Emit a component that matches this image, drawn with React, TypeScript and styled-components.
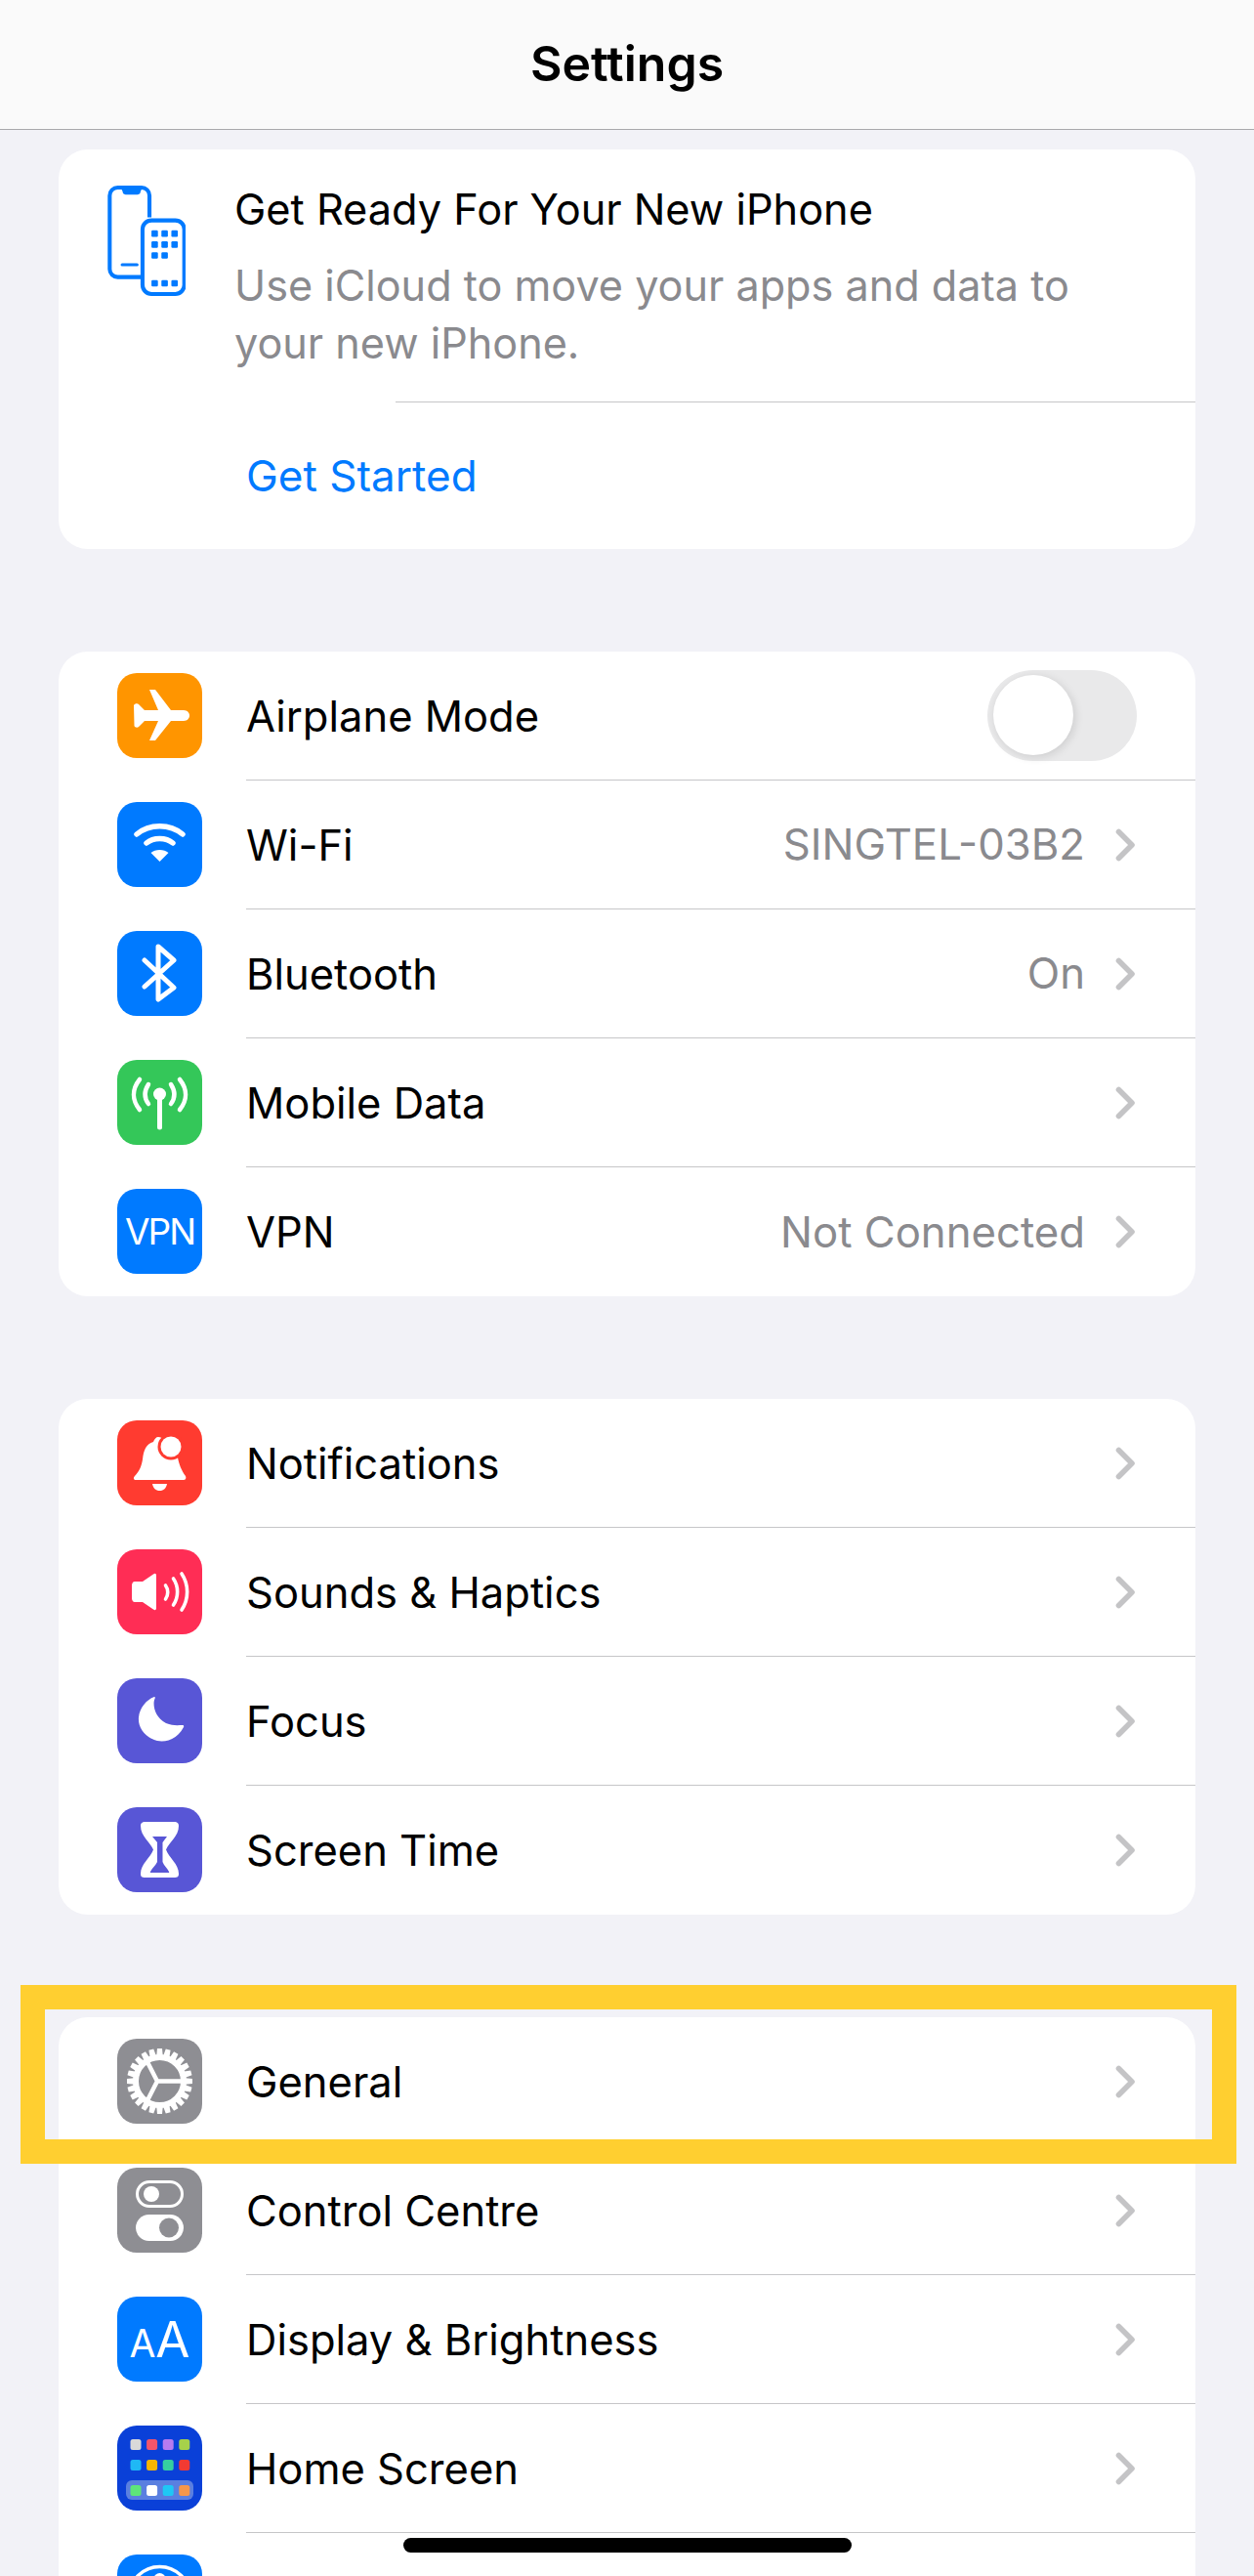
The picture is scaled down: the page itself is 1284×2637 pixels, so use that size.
import React from "react";
import styled, { createGlobalStyle } from "styled-components";

const GlobalStyle = createGlobalStyle`
  html, body { margin: 0; padding: 0; background: #f2f2f7; }
  body { font-family: Inter, "Noto Sans", "Liberation Sans", sans-serif; -webkit-font-smoothing: antialiased; }
`;

const Screen = styled.div`
  position: relative;
  width: 1284px;
  height: 2637px;
  overflow: hidden;
  background: #f2f2f7;
`;

const NavBar = styled.header`
  height: 132px;
  box-sizing: content-box;
  display: flex;
  align-items: center;
  justify-content: center;
  background: #fafafa;
  border-bottom: 1px solid #a9a9ac;
`;

const NavTitle = styled.h1`
  margin: 0 0 2px;
  font-size: 50px;
  font-weight: 600;
  color: #000;
`;

const Groups = styled.main`
  display: flex;
  flex-direction: column;
  gap: 105px;
  padding: 20px 60px 0;
`;

const Card = styled.section`
  background: #fff;
  border-radius: 30px;
  overflow: hidden;
`;

const Promo = styled.div`
  display: flex;
  height: 258px;
  box-sizing: border-box;
  padding: 37px 0 0 50px;
  gap: 50px;
`;

const PromoText = styled.div`
  display: flex;
  flex-direction: column;
  margin-top: -2px;
`;

const PromoTitle = styled.div`
  font-size: 43.3px;
  line-height: 52px;
  color: #000;
`;

const PromoBody = styled.div`
  margin-top: 23px;
  font-size: 43.2px;
  line-height: 59px;
  color: #8a8a8e;
`;

const CardRule = styled.div`
  height: 1px;
  margin-left: 345px;
  background: #c6c6c8;
`;

const ActionRow = styled.div`
  display: flex;
  align-items: center;
  height: 150px;
  padding-left: 192px;
  font-size: 44px;
  color: #007aff;
`;

const Row = styled.div`
  display: flex;
  align-items: center;
  height: 132px;
  box-sizing: border-box;
  padding-left: 60px;
`;

const Tile = styled.div<{ $bg: string }>`
  width: 87px;
  height: 87px;
  flex: none;
  margin-bottom: 2px;
  border-radius: 20px;
  background: ${(p) => p.$bg};
  display: flex;
  align-items: center;
  justify-content: center;
  overflow: hidden;
`;

const RowMain = styled.div<{ $last?: boolean }>`
  flex: 1;
  align-self: stretch;
  display: flex;
  align-items: center;
  margin-left: 45px;
  padding-right: 60px;
  border-bottom: ${(p) => (p.$last ? "none" : "1px solid #c6c6c8")};
`;

const RowLabel = styled.span`
  flex: 1;
  font-size: 43.5px;
  color: #000;
`;

const RowValue = styled.span`
  font-size: 43.7px;
  color: #8a8a8e;
  margin-right: 31px;
`;

const Chevron = styled.svg`
  width: 21px;
  height: 34px;
  flex: none;
  margin-right: 1px;
`;

const Switch = styled.div`
  position: relative;
  width: 153px;
  height: 93px;
  border-radius: 47px;
  background: #e9e9ea;
`;

const SwitchKnob = styled.div`
  position: absolute;
  top: 5px;
  left: 6px;
  width: 82px;
  height: 82px;
  border-radius: 50%;
  background: #fff;
  box-shadow: 2px 2px 10px rgba(0, 0, 0, 0.12);
`;

const TileCaption = styled.span`
  color: #fff;
  font-size: 37px;
  letter-spacing: -2px;
`;

const LetterPair = styled.span`
  display: flex;
  align-items: baseline;
  color: #fff;
  line-height: 1;
  margin-top: 1px;
`;

const Letter = styled.span<{ $size: number }>`
  font-size: ${(p) => p.$size}px;
`;

const Highlight = styled.div`
  position: absolute;
  left: 21px;
  top: 2032px;
  width: 1245px;
  height: 183px;
  box-sizing: border-box;
  border: 25px solid #ffcf30;
`;

const HomeIndicator = styled.div`
  position: absolute;
  left: 413px;
  top: 2598px;
  width: 459px;
  height: 15px;
  border-radius: 8px;
  background: #000;
`;

const Glyph = styled.svg`
  width: 87px;
  height: 87px;
  display: block;
`;

const RowArrow = () => (
  <Chevron viewBox="0 0 21 34" fill="none">
    <path d="M3.5 3.5 L17 17 L3.5 30.5" stroke="#c4c4c6" strokeWidth="5.6" strokeLinecap="round" strokeLinejoin="round" />
  </Chevron>
);

const PhonesIcon = () => (
  <svg width="80" height="113" viewBox="2 2 78 111" style={{ flex: "none" }}>
    <path
      d="M36 94 H12 a8 8 0 0 1 -8 -8 V12 a8 8 0 0 1 8 -8 H36 a8 8 0 0 1 8 8 V34"
      fill="none"
      stroke="#007aff"
      strokeWidth="4"
    />
    <path d="M15 4 h22 l-2 4 a3 3 0 0 1 -3 3 h-12 a3 3 0 0 1 -3 -3 z" fill="#007aff" />
    <rect x="15" y="80" width="18" height="3" rx="1.5" fill="#007aff" />
    <rect x="37" y="37" width="42" height="74" rx="9" fill="#fff" stroke="#007aff" strokeWidth="4" />
    {[0, 1, 2].flatMap((c) =>
      [0, 1, 2].map((r) =>
        r === 2 && c === 2 ? null : (
          <rect key={`${c}-${r}`} x={46 + c * 10} y={47 + r * 11} width="6.5" height="6.5" rx="1.2" fill="#007aff" />
        )
      )
    )}
    {[0, 1, 2].map((c) => (
      <rect key={c} x={46 + c * 10} y={97} width="6.5" height="6.5" rx="1.2" fill="#007aff" />
    ))}
  </svg>
);

const PlaneIcon = () => (
  <Glyph viewBox="0 0 87 87">
    <path
      fill="#fff"
      d="M33 17 L39 17 L55 38 L68 38 C72 38 74 41 74 43.5 C74 46 72 49 68 49 L55 49 L39 69 L33 69 L42 49 L28 49 L22 55 C21 56 18 56 17.5 54 L17 33 C18 31 21 31 22 32 L28 38 L42 38 Z"
    />
  </Glyph>
);

const WifiIcon = () => (
  <Glyph viewBox="0 0 87 87" fill="none" stroke="#fff" strokeWidth="6.5">
    <path d="M20 33 C33 22 54 22 67 33" strokeWidth="5.5" strokeLinecap="round" />
    <path d="M30 42 C37 36 50 36 57 42" strokeWidth="5.5" strokeLinecap="round" />
    <path d="M34.5 52 C39 48 48 48 52.5 52 L43.5 61 Z" fill="#fff" stroke="none" />
  </Glyph>
);

const BluetoothIcon = () => (
  <Glyph viewBox="0 0 87 87" fill="none">
    <path
      d="M28 30 L58 58 L42 70 V16 L58 30 L28 57"
      stroke="#fff"
      strokeWidth="5"
      strokeLinecap="round"
      strokeLinejoin="round"
    />
  </Glyph>
);

const AntennaIcon = () => (
  <Glyph viewBox="0 0 87 87" fill="none" stroke="#fff" strokeLinecap="round">
    <circle cx="43.5" cy="35" r="6.5" fill="#fff" stroke="none" />
    <path d="M43.5 36 V69" strokeWidth="5" />
    <path d="M32 25 C27.5 32 27.5 39 32 45" strokeWidth="4.5" />
    <path d="M55 25 C59.5 32 59.5 39 55 45" strokeWidth="4.5" />
    <path d="M23 20 C15 30 15 41 23 51" strokeWidth="4.5" />
    <path d="M64 20 C72 30 72 41 64 51" strokeWidth="4.5" />
  </Glyph>
);

const BellIcon = () => (
  <Glyph viewBox="0 0 87 87">
    <path
      fill="#fff"
      d="M42 17 C47 17 49 21 50 23 C52 35 60 34 62 38 C63 44 66 52 70 57 C71 59 70 61 68 61 H19 C17 61 16 59 18 57 C23 52 25 46 26 40 C27 30 30 24 37 22 C38 19 40 17 42 17 Z"
    />
    <path fill="#fff" d="M36 65 H51 C50 70 47 72 43.5 72 C40 72 37 70 36 65 Z" />
    <circle cx="55" cy="27" r="13.5" fill="#ff3b30" />
    <circle cx="55" cy="27" r="10.5" fill="#fff" />
  </Glyph>
);

const SpeakerIcon = () => (
  <Glyph viewBox="0 0 87 87" fill="none" stroke="#fff" strokeLinecap="round">
    <path
      fill="#fff"
      stroke="none"
      d="M15 37 C15 35 16 33 18 33 H26 L37 25.5 C39 24 40 25 40 27 V60 C40 62 39 63 37 61.5 L26 54 H18 C16 54 15 52 15 50 Z"
    />
    <path d="M49.5 37 C52.5 41 52.5 47 49.5 51" strokeWidth="3.6" />
    <path d="M57.5 30 C63 38 63 49 57.500 57" strokeWidth="3.6" />
    <path d="M66 25 C73.500 36 73.500 51 66 62" strokeWidth="3.6" />
  </Glyph>
);

const MoonIcon = () => (
  <Glyph viewBox="0 0 87 87">
    <path
      fill="#fff"
      d="M38 19 C39 19 39 20 38.5 21 C36 26 38 40 50 46 C57 49 63 48 67 48 C68 48 68.500 49 68 50 C62 62 50 66 41 64 C29 61 21 51 22 40 C23 30 30 22 38 19 Z"
    />
  </Glyph>
);

const HourglassIcon = () => (
  <Glyph viewBox="0 0 87 87">
    <path
      fill="#fff"
      d="M29 15 H58 C62 15 63 17 63 19 C63 30 53 36 50 43.500 C53 52 63 58 63 68 C63 71 62 72 58 72 H29 C25 72 24 71 24 68 C24 58 34 52 37 43.500 C34 36 24 30 24 19 C24 17 25 15 29 15 Z"
    />
    <path
      fill="#5856d6"
      d="M36 30 H51 L46.500 36 V56 C48 60 51 62 53 66 C53.500 67 53 67 52 67 H35 C34 67 33.500 67 34 66 C36 62 39 60 41 56 V36 Z"
    />
  </Glyph>
);

const gearTeeth = Array.from({ length: 24 }, (_, i) => (i * 360) / 24);

const GearIcon = () => (
  <Glyph viewBox="0 0 87 87" fill="none" stroke="#fff">
    <circle cx="43.5" cy="43.5" r="24.5" strokeWidth="6" />
    {gearTeeth.map((a) => (
      <path
        key={a}
        d="M40 20 L41 10 H46 L47 20 Z"
        fill="#fff"
        stroke="none"
        transform={`rotate(${a} 43.5 43.5)`}
      />
    ))}
    <path d="M41 43.500 H66 M41 43.500 L31 24 M41 43.500 L31 63" strokeWidth="4.500" />
  </Glyph>
);

const TogglesIcon = () => (
  <Glyph viewBox="0 0 87 87">
    <rect x="20.500" y="14.500" width="46" height="25" rx="12.500" fill="none" stroke="#fff" strokeWidth="3" />
    <circle cx="35" cy="27" r="8" fill="#fff" />
    <rect x="19" y="48" width="49" height="27" rx="13.500" fill="#fff" />
    <circle cx="53" cy="61.500" r="10" fill="#8e8e93" />
  </Glyph>
);

const homeDots = [
  ["#d9d9d9", "#f4556b", "#b77bf0", "#a6d14a"],
  ["#1fb8f5", "#f7b500", "#35cfa0", "#f23a33"],
];
const dockDots = ["#5ee57a", "#ffffff", "#1fc7f5", "#f5974a"];

const HomeIcon = () => (
  <Glyph viewBox="0 0 87 87">
    {homeDots.flatMap((line, r) =>
      line.map((c, i) => <rect key={`${r}-${i}`} x={13.500 + i * 16.600} y={14 + r * 21} width="11" height="11" rx="2.500" fill={c} />)
    )}
    <rect x="9" y="56" width="69" height="20" rx="6" fill="#5a7fe0" />
    {dockDots.map((c, i) => (
      <rect key={c} x={13.500 + i * 16.600} y={61} width="11" height="11" rx="2.500" fill={c} />
    ))}
  </Glyph>
);

const AccessIcon = () => (
  <Glyph viewBox="0 0 87 87">
    <circle cx="43.500" cy="43.500" r="31" fill="none" stroke="#fff" strokeWidth="3.500" />
    <circle cx="43.500" cy="25" r="6" fill="#fff" />
    <path d="M25 35 H62 M43.500 35 V50 M43.500 50 L33 68 M43.500 50 L54 68" stroke="#fff" strokeWidth="5" strokeLinecap="round" fill="none" />
  </Glyph>
);

const SettingRow = ({
  color,
  icon,
  label,
  value,
  last,
  control,
}: {
  color: string;
  icon: React.ReactNode;
  label?: string;
  value?: string;
  last?: boolean;
  control?: React.ReactNode;
}) => (
  <Row>
    <Tile $bg={color}>{icon}</Tile>
    <RowMain $last={last}>
      <RowLabel>{label}</RowLabel>
      {value && <RowValue>{value}</RowValue>}
      {control ?? <RowArrow />}
    </RowMain>
  </Row>
);

export default function App() {
  return (
    <Screen>
      <GlobalStyle />
      <NavBar>
        <NavTitle>Settings</NavTitle>
      </NavBar>
      <Groups>
        <Card>
          <Promo>
            <PhonesIcon />
            <PromoText>
              <PromoTitle>Get Ready For Your New iPhone</PromoTitle>
              <PromoBody>
                Use iCloud to move your apps and data to
                <br />
                your new iPhone.
              </PromoBody>
            </PromoText>
          </Promo>
          <CardRule />
          <ActionRow>Get Started</ActionRow>
        </Card>

        <Card>
          <SettingRow
            color="#ff9500"
            icon={<PlaneIcon />}
            label="Airplane Mode"
            control={
              <Switch>
                <SwitchKnob />
              </Switch>
            }
          />
          <SettingRow color="#007aff" icon={<WifiIcon />} label="Wi-Fi" value="SINGTEL-03B2" />
          <SettingRow color="#007aff" icon={<BluetoothIcon />} label="Bluetooth" value="On" />
          <SettingRow color="#34c759" icon={<AntennaIcon />} label="Mobile Data" />
          <SettingRow color="#007aff" icon={<TileCaption>VPN</TileCaption>} label="VPN" value="Not Connected" last />
        </Card>

        <Card>
          <SettingRow color="#ff3b30" icon={<BellIcon />} label="Notifications" />
          <SettingRow color="#ff2d55" icon={<SpeakerIcon />} label="Sounds & Haptics" />
          <SettingRow color="#5856d6" icon={<MoonIcon />} label="Focus" />
          <SettingRow color="#5856d6" icon={<HourglassIcon />} label="Screen Time" last />
        </Card>

        <Card>
          <SettingRow color="#8e8e93" icon={<GearIcon />} label="General" />
          <SettingRow color="#8e8e93" icon={<TogglesIcon />} label="Control Centre" />
          <SettingRow
            color="#007aff"
            icon={
              <LetterPair>
                <Letter $size={39}>A</Letter>
                <Letter $size={51}>A</Letter>
              </LetterPair>
            }
            label="Display & Brightness"
          />
          <SettingRow color="#0a40d8" icon={<HomeIcon />} label="Home Screen" />
          <SettingRow color="#007aff" icon={<AccessIcon />} />
        </Card>
      </Groups>
      <Highlight />
      <HomeIndicator />
    </Screen>
  );
}
